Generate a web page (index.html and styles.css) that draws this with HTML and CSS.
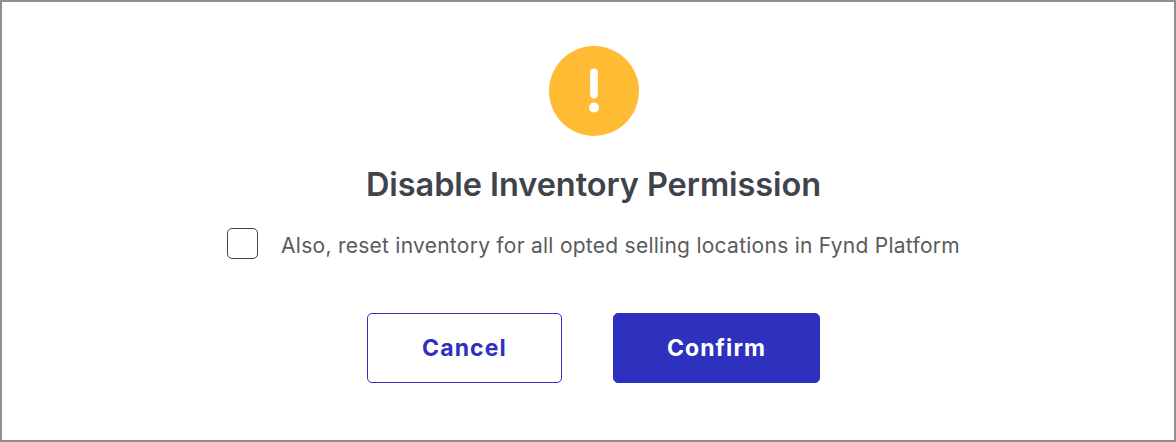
FILE: index.html
```html
<!DOCTYPE html>
<html lang="en">
<head>
<meta charset="utf-8">
<title>Disable Inventory Permission</title>
<link rel="stylesheet" href="styles.css">
</head>
<body>
<main class="dialog">
  <svg class="icon" viewBox="0 0 90 90" aria-hidden="true">
    <circle cx="45" cy="45" r="45" fill="#ffbb33"/>
    <rect x="41.200" y="22.500" width="7.600" height="30" rx="3.800" fill="#fff"/>
    <circle cx="45" cy="61.500" r="5" fill="#fff"/>
  </svg>
  <h1 class="title">Disable Inventory Permission</h1>
  <label class="option"><input class="checkbox" type="checkbox"><span class="option-text">Also, reset inventory for all opted selling locations in Fynd Platform</span></label>
  <div class="actions">
    <button class="button cancel">Cancel</button>
    <button class="button confirm">Confirm</button>
  </div>
</main>
</body>
</html>
```
FILE: styles.css
```css
* { box-sizing: border-box; }
body { margin: 0; font-family: Inter, sans-serif; background: #fff; }
.dialog { width: 1176px; height: 442px; border: 2px solid #8f8f8f; padding: 44px 0 0 10px; display: flex; flex-direction: column; align-items: center; }
.icon { width: 90px; height: 90px; flex: none; margin-left: 2px; }
.title { margin: 28px 0 0 1px; font-size: 32.5px; line-height: 42px; font-weight: 600; letter-spacing: -0.07px; color: #41434c; white-space: nowrap; }
.option { display: flex; gap: 23px; margin: 22px 0 0 1px; height: 31px; align-items: center; }
.checkbox { appearance: none; width: 31px; height: 31px; margin: 0; border: 1px solid #41434c; border-radius: 5px; background: #fff; }
.option-text { font-size: 21px; line-height: 31px; padding-top: 3px; letter-spacing: 0.26px; color: #5b5b5b; white-space: nowrap; }
.actions { display: flex; gap: 51px; margin-top: 54px; }
.button { height: 70px; padding: 0; border: 1px solid #2e31be; border-radius: 5px; font: 700 23px Inter, sans-serif; letter-spacing: 1.1px; }
.cancel { width: 195px; padding-left: 1px; color: #2e31be; background: #fff; }
.confirm { width: 207px; padding-left: 1px; color: #fff; background: #2e31be; }
```
